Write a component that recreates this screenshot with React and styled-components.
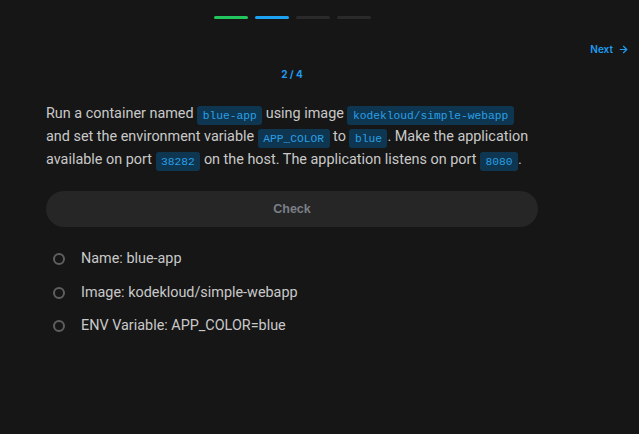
import React from "react";
import styled, { createGlobalStyle } from "styled-components";

const steps = ["done", "active", "todo", "todo"];
const checks = [
  "Name: blue-app",
  "Image: kodekloud/simple-webapp",
  "ENV Variable: APP_COLOR=blue",
];

export default function App() {
  return (
    <>
      <Global />
      <Page>
        <Progress>
          {steps.map((s, i) => (
            <Step key={i} state={s} />
          ))}
        </Progress>
        <TopRow>
          <NextLink>
            Next
            <svg width="11" height="11" viewBox="0 0 24 24" fill="none" stroke="currentColor" strokeWidth="2.6" strokeLinecap="round" strokeLinejoin="round">
              <path d="M5 12h14" />
              <path d="M12 5l7 7-7 7" />
            </svg>
          </NextLink>
        </TopRow>
        <Body>
          <Counter>2 / 4</Counter>
          <Question>
            Run a container named <Code>blue-app</Code> using image{" "}
            <Code>kodekloud/simple-webapp</Code> and set the environment variable{" "}
            <Code>APP_COLOR</Code> to <Code>blue</Code>. Make the application
            available on port <Code>38282</Code> on the host. The application
            listens on port <Code>8080</Code>.
          </Question>
          <CheckButton>Check</CheckButton>
          <CheckList>
            {checks.map((c) => (
              <CheckItem key={c}>
                <Ring />
                {c}
              </CheckItem>
            ))}
          </CheckList>
        </Body>
      </Page>
    </>
  );
}

const Global = createGlobalStyle`
  html, body {
    margin: 0;
    background: #161616;
    font-family: Inter, "Noto Sans", sans-serif;
  }
`;

const Page = styled.div`
  width: 639px;
  height: 434px;
  background: #161616;
  box-sizing: border-box;
  padding: 16px 10px 0 46px;
`;

const Progress = styled.div`
  display: flex;
  gap: 7px;
  width: 492px;
  justify-content: center;
`;

const Step = styled.div`
  width: 34px;
  height: 3px;
  border-radius: 2px;
  background: ${(p) =>
    p.state === "done" ? "#22c55e" : p.state === "active" ? "#1da1f2" : "#2a2a2a"};
`;

const TopRow = styled.div`
  display: flex;
  justify-content: flex-end;
  margin-top: 24px;
`;

const NextLink = styled.a`
  display: flex;
  align-items: center;
  gap: 5px;
  color: #1f9cf0;
  font-size: 10px;
  font-weight: 600;
  cursor: pointer;
`;

const Body = styled.div`
  width: 492px;
  display: flex;
  flex-direction: column;
`;

const Counter = styled.div`
  text-align: center;
  color: #1f9cf0;
  font-size: 10px;
  font-weight: 700;
  margin-top: 13px;
`;

const Question = styled.p`
  margin: 22px 0 0;
  color: #c9c9c9;
  font-family: Roboto, "Noto Sans", sans-serif;
  font-size: 14.4px;
  line-height: 23px;
`;

const Code = styled.code`
  font-family: "Liberation Mono", "DejaVu Sans Mono", monospace;
  font-size: 11.25px;
  line-height: 1;
  color: #2b9fe4;
  background: #0e3650;
  padding: 3.5px 5.5px;
  border-radius: 3px;
`;

const CheckButton = styled.button`
  margin-top: 20px;
  height: 36px;
  border: none;
  border-radius: 18px;
  background: #262626;
  color: #7b7f86;
  font-family: "Liberation Sans", Arial, sans-serif;
  font-weight: 700;
  font-size: 12.5px;
`;

const CheckList = styled.ul`
  list-style: none;
  margin: 22px 0 0;
  padding: 0 0 0 7px;
  display: flex;
  flex-direction: column;
  gap: 13.5px;
`;

const CheckItem = styled.li`
  display: flex;
  align-items: center;
  gap: 16px;
  color: #c9c9c9;
  font-family: Roboto, "Noto Sans", sans-serif;
  font-size: 14.4px;
  line-height: 20px;
`;

const Ring = styled.span`
  width: 8px;
  height: 8px;
  border-radius: 50%;
  border: 2px solid #5f5f5f;
`;
